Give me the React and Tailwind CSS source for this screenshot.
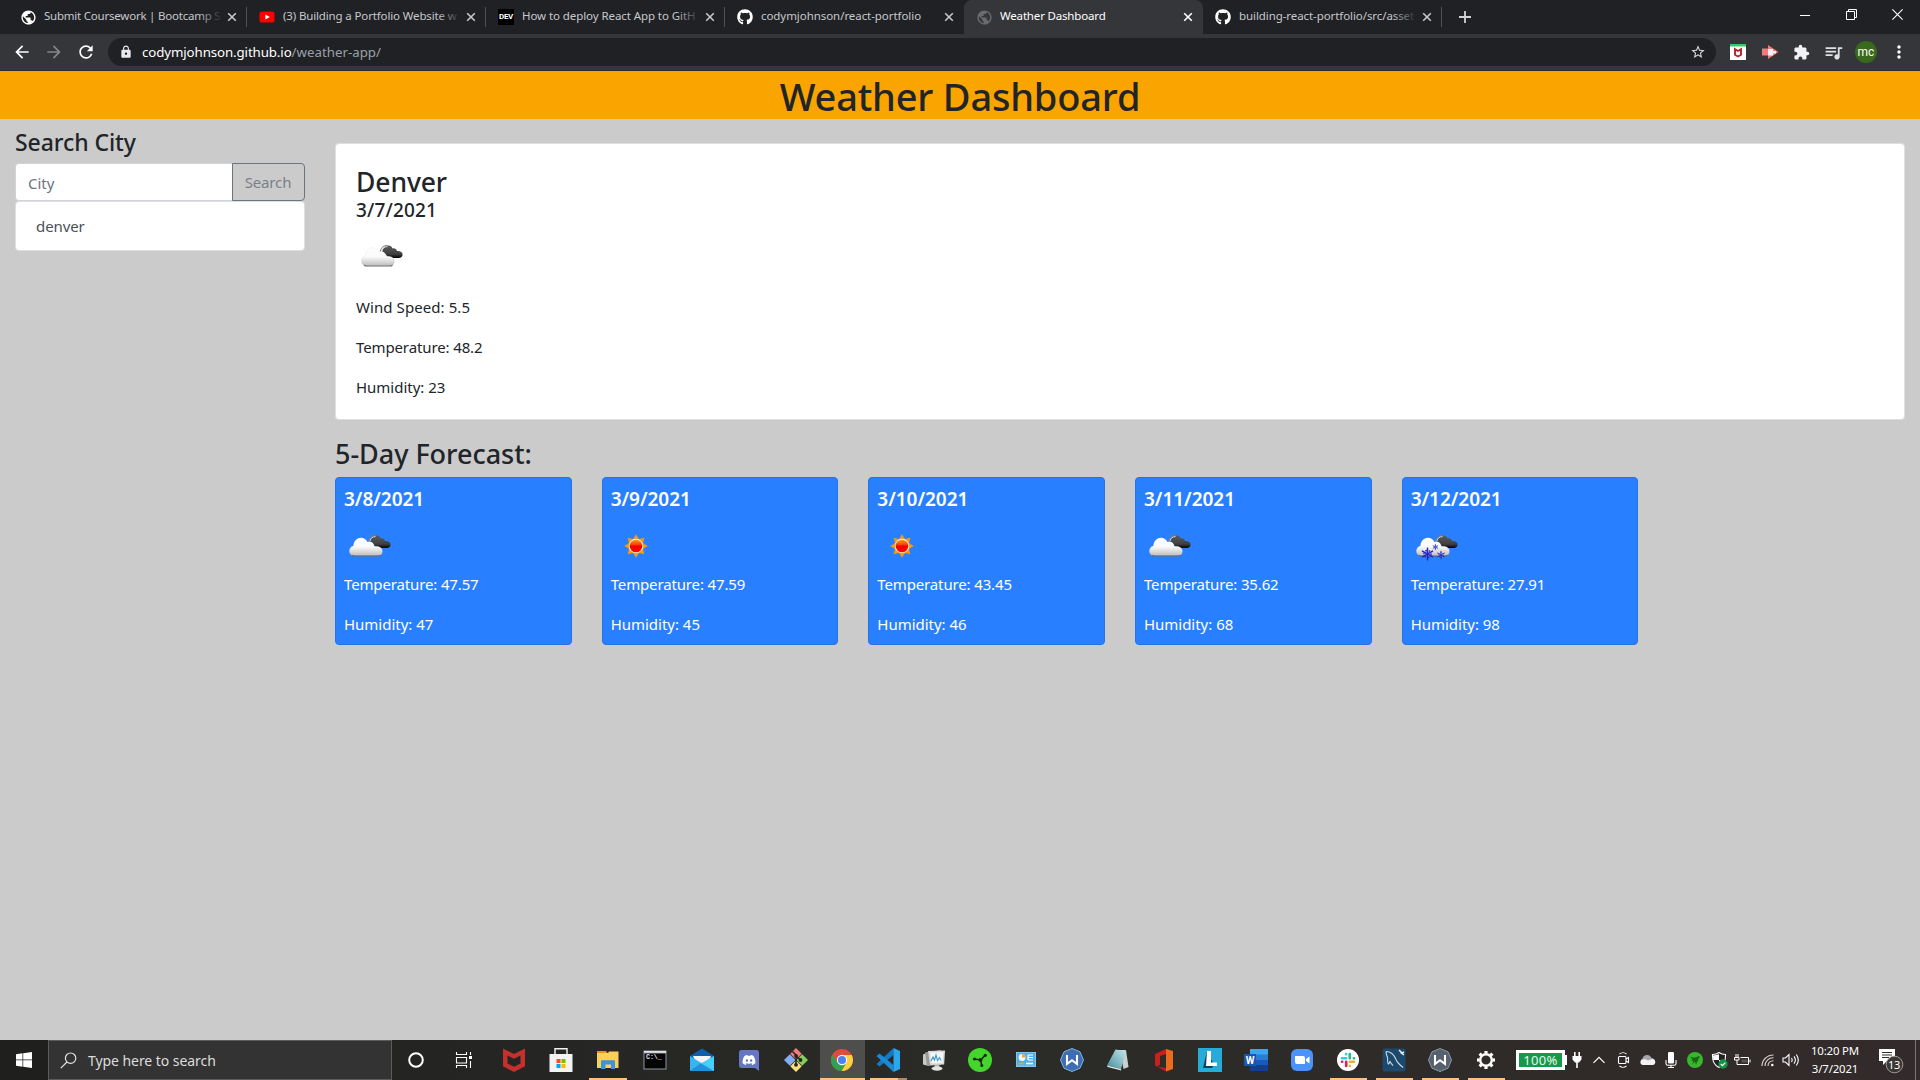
import React from "react";
import { FaGithub, FaDiscord } from "react-icons/fa";
import {
  MdExtension,
  MdQueueMusic,
  MdStarBorder,
  MdLock,
  MdRefresh,
  MdArrowBack,
  MdArrowForward,
  MdPublic,
  MdMoreVert,
} from "react-icons/md";

const Close = ({ className = "" }) => (
  <svg viewBox="0 0 10 10" className={"h-[10px] w-[10px] shrink-0 " + className}>
    <path d="M1.2 1.2 8.8 8.8M8.8 1.2 1.2 8.8" stroke="currentColor" strokeWidth="1.6" />
  </svg>
);

const YouTube = () => (
  <svg viewBox="0 0 16 16" className="h-4 w-4">
    <rect x="0.5" y="2.6" width="15" height="11" rx="2.6" fill="#f00" />
    <path d="M6.4 5.6v5L10.8 8.100z" fill="#fff" />
  </svg>
);

const DevIcon = () => (
  <div className="flex h-4 w-4 items-center justify-center bg-black">
    <span className="font-['Roboto',sans-serif] text-[8px] font-bold leading-none tracking-[-0.3px] text-white">DEV</span>
  </div>
);

const Globe = ({ className = "" }) => <MdPublic className={"h-[17px] w-[17px] " + className} />;
const Octo = () => <FaGithub className="h-4 w-4 text-white" />;

const tabs = [
  { icon: <Globe className="text-white" />, title: "Submit Coursework | Bootcamp S", track: "tracking-[-0.22px]", fade: true },
  { icon: <YouTube />, title: "(3) Building a Portfolio Website w", track: "tracking-[-0.14px]", fade: true },
  { icon: <DevIcon />, title: "How to deploy React App to GitH", track: "tracking-[-0.08px]", fade: true },
  { icon: <Octo />, title: "codymjohnson/react-portfolio", track: "tracking-[-0.06px]" },
  { icon: <Globe className="text-[#696b6f]" />, title: "Weather Dashboard", track: "tracking-[-0.17px]", active: true },
  { icon: <Octo />, title: "building-react-portfolio/src/asset", track: "tracking-[-0.08px]", fade: true },
];

function Tab({ tab, divider }) {
  return (
    <div
      className={
        "flex h-[34px] w-[239px] shrink-0 items-center pl-[11px] " +
        (tab.active ? "rounded-t-lg bg-[#35363a] text-white" : "text-[#c6c8cc]")
      }
    >
      <div className="flex w-[18px] shrink-0 justify-center">{tab.icon}</div>
      <div className="relative mb-[2px] ml-[7px] h-5 w-[178px] overflow-hidden whitespace-nowrap leading-5">
        <span className={"block text-[11.5px] leading-5 " + tab.track}>{tab.title}</span>
        {tab.fade && <div className="absolute inset-y-0 right-0 w-6 bg-gradient-to-r from-transparent to-[#202124]" />}
      </div>
      <Close className="ml-[5px]" />
      <div className={"ml-auto h-5 w-px " + (divider ? "bg-[#4f5155]" : "bg-transparent")} />
    </div>
  );
}

function TabStrip() {
  return (
    <div className="flex h-[34px] items-center bg-[#202124] pl-2">
      {tabs.map((t, i) => (
        <Tab key={i} tab={t} divider={i !== 3 && i !== 4} />
      ))}
      <svg viewBox="0 0 12 12" className="ml-[17px] h-3 w-3">
        <path d="M6 0v12M0 6h12" stroke="#d0d2d5" strokeWidth="1.8" />
      </svg>
      <div className="mb-[5px] ml-auto mr-[17px] flex items-center gap-[35px] text-white">
        <svg viewBox="0 0 10 10" className="-ml-px mr-px h-[10px] w-[10px]">
          <path d="M0 5.500h10" stroke="currentColor" />
        </svg>
        <svg viewBox="0 0 11 11" className="h-[11px] w-[11px]" fill="none" stroke="currentColor">
          <path d="M.5 2.500h8v8h-8zM2.500 2.500v-2h8v8h-2" />
        </svg>
        <svg viewBox="0 0 11 11" className="h-[11px] w-[11px]">
          <path d="M.4.4l10.200 10.200M10.600.4.4 10.600" stroke="currentColor" strokeWidth="1.1" />
        </svg>
      </div>
    </div>
  );
}

const McAfeeExt = () => (
  <svg viewBox="0 0 16 16" className="h-4 w-4">
    <path fill="#fff" d="M0 0h16v16H0z" />
    <path fill="#35c96b" d="M0 0h16v2.500H0z" />
    <path d="M5 5.200v5.600l3 1.700 3-1.700V5.200L8 7z" fill="none" stroke="#b6202c" strokeWidth="1.900" />
  </svg>
);

const ArrowExt = () => (
  <svg viewBox="0 0 17 14" className="h-[14px] w-[17px]">
    <path fill="#f37a7c" d="M0 3.500h6V0l10.500 7L6 14v-3.500H0z" />
    <path fill="#fff" d="M6 4h5v2h3v2.500h-3v2H6z" opacity=".85" />
  </svg>
);

function Toolbar() {
  return (
    <div className="flex h-[37px] items-center border-b border-[#2a2a2c] bg-[#35363a] pl-3">
      <MdArrowBack className="h-5 w-5 text-white" />
      <MdArrowForward className="ml-3 h-5 w-5 text-[#85878a]" />
      <MdRefresh className="ml-3 h-5 w-5 text-white" />
      <div className="ml-3 flex h-7 w-[1608px] items-center rounded-full bg-[#202124] pl-[11px] pr-[10px]">
        <MdLock className="h-[14px] w-[14px] text-[#e8eaed]" />
        <div className="ml-[9px] mt-[2px] text-[13.3px] leading-none text-[#9aa0a6]">
          <span className="tracking-[-0.11px] text-white">codymjohnson.github.io</span>
          <span>/weather-app/</span>
        </div>
        <MdStarBorder className="ml-auto h-4 w-4 text-[#dadce0]" />
      </div>
      <div className="ml-[14px] flex items-center">
        <McAfeeExt />
        <div className="ml-4">
          <ArrowExt />
        </div>
        <MdExtension className="ml-[14px] h-[17px] w-[17px] text-[#f1f3f4]" />
        <MdQueueMusic className="ml-[13px] h-[21px] w-[21px] text-[#dfe1e4]" />
        <div className="ml-[11px] flex h-[22px] w-[22px] items-center justify-center rounded-full bg-[#38691d] font-['Roboto',sans-serif] text-[12px] leading-none text-white">
          mc
        </div>
        <MdMoreVert className="ml-[12px] h-5 w-5 text-white" />
      </div>
    </div>
  );
}

/* Weather pictograms, all on a 50px square */
function Clouds() {
  return (
    <>
      <path
        d="M26 20c1-4 4-6 7-5.500 2 .3 3 1.500 3.500 3 2-.5 4 .5 4.500 2.500 3-.3 5.600 1 5.600 3.600 0 2.200-1.600 3.400-4 3.400H33z"
        fill="url(#dark-cloud)"
      />
      <path d="M24.300 20.500c.8-4.500 4-6.600 7.500-5.800" fill="none" stroke="#7d7d7d" strokeWidth="1" />
      <path d="M25.800 20.300c.8-3.300 3-5 5.800-4.600" fill="none" stroke="#d8d8d8" strokeWidth="1" />
      <path
        d="M10.500 34.800c-3.200 0-5.200-2-5.200-4.800 0-2.700 1.700-4.500 4-5 .3-4.500 3.200-8.300 7.500-8.300 3.300 0 5.500 1.600 6.700 4.300 3.700-1.300 6.600 1 6.800 4.300 4.600-.5 8.200 1.200 8.200 4.900 0 2.900-1.800 4.600-5 4.600z"
        fill="url(#light-cloud)"
        stroke="#9a9a9a"
        strokeOpacity=".16"
        strokeWidth=".6"
      />
      <path d="M8 34.200c1 .7 2 .8 3 .8h22.500c1 0 2.200-.2 3-.8" fill="none" stroke="#6d6d6d" strokeWidth="1.100" />
    </>
  );
}

function Flake({ x, y, r }) {
  const k = r * 0.866;
  const h = r * 0.5;
  return (
    <g transform={`translate(${x} ${y})`} stroke="#2626c4" strokeWidth={r / 4.6}>
      <path d={`M0 ${-r}V${r}M${-k} ${-h}L${k} ${h}M${-k} ${h}L${k} ${-h}`} />
      <circle r={r * 0.55} fill="none" strokeDasharray={`${r / 4} ${r / 3.4}`} />
    </g>
  );
}

function WeatherIcon({ kind }) {
  return (
    <svg viewBox="0 0 50 50" className="block h-[50px] w-[50px]">
      <defs>
        <linearGradient id="light-cloud" x1="0" y1="0" x2="0" y2="1">
          <stop offset="0" stopColor="#fff" />
          <stop offset=".5" stopColor="#fafafa" />
          <stop offset="1" stopColor="#bdbdbd" />
        </linearGradient>
        <linearGradient id="dark-cloud" x1="0" y1="0" x2="0" y2="1">
          <stop offset="0" stopColor="#5a5a5a" />
          <stop offset=".7" stopColor="#3f3f3f" />
          <stop offset="1" stopColor="#000" />
        </linearGradient>
        <linearGradient id="sun-disc" x1="0" y1="0" x2="0" y2="1">
          <stop offset="0" stopColor="#ff9a1a" />
          <stop offset=".4" stopColor="#fb3d06" />
          <stop offset=".5" stopColor="#f40000" />
          <stop offset="1" stopColor="#ff0a00" />
        </linearGradient>
      </defs>
      {kind === "sun" ? (
        <g transform="translate(25 25)">
          {[0, 45, 90, 135, 180, 225, 270, 315].map((a) => (
            <path key={a} d="M-2.800-7.200 0-11.800 2.800-7.200z" fill="#f19a12" transform={`rotate(${a})`} />
          ))}
          <circle r="7.800" fill="#f7a829" />
          <circle r="7.200" fill="#fff1d8" />
          <circle r="6.300" fill="url(#sun-disc)" />
        </g>
      ) : (
        <Clouds />
      )}
      {kind === "snow" && (
        <>
          <Flake x={16.5} y={33} r={6.4} />
          <Flake x={24.4} y={26} r={3.1} />
          <Flake x={30} y={34} r={4.2} />
        </>
      )}
    </svg>
  );
}

const forecast = [
  { date: "3/8/2021", kind: "cloud", temp: "47.57", hum: "47" },
  { date: "3/9/2021", kind: "sun", temp: "47.59", hum: "45" },
  { date: "3/10/2021", kind: "sun", temp: "43.45", hum: "46" },
  { date: "3/11/2021", kind: "cloud", temp: "35.62", hum: "68" },
  { date: "3/12/2021", kind: "snow", temp: "27.91", hum: "98" },
];

function Page() {
  return (
    <div className="flex-1 bg-[#cbcbcb] text-[#212529]">
      <h1 className="h-12 bg-[#faa400] text-center text-[38px] font-medium leading-[50px] tracking-[-0.2px]">
        Weather Dashboard
      </h1>
      <div className="flex">
        <aside className="w-[320px] px-[15px] pt-2">
          <h3 className="h-9 text-[23px] font-medium leading-[30px] tracking-[-0.08px]">Search City</h3>
          <div className="flex h-[38px]">
            <div className="flex-1 rounded-l border border-r-0 border-[#ced4da] bg-white pl-3 text-[15px] leading-[38px] text-[#6c757d]">
              City
            </div>
            <button className="w-[73px] rounded-r border border-[#6c757d] pr-px text-[15px] leading-[36px] tracking-[-0.15px] text-[#7a8087]">
              Search
            </button>
          </div>
          <div className="h-[50px] rounded border border-[#dfdfdf] bg-white pl-5 text-[15px] leading-[48px] tracking-[-0.1px] text-[#495057]">
            denver
          </div>
        </aside>
        <main className="flex-1 pl-[15px] pr-[15px] pt-6">
          <section className="h-[277px] rounded border border-[#dfdfdf] bg-white p-5 text-[15px] leading-6">
            <h3 className="h-[33px] text-[26.5px] font-medium leading-[37px] tracking-[-0.1px]">Denver</h3>
            <h5 className="h-6 text-[19px] font-medium leading-[26px] tracking-[0.14px]">3/7/2021</h5>
            <div className="mb-[14px] mt-[10px]">
              <WeatherIcon kind="cloud" />
            </div>
            <p className="mb-4 tracking-[0.08px]">Wind Speed: 5.5</p>
            <p className="mb-4 tracking-[-0.12px]">Temperature: 48.2</p>
            <p className="tracking-[-0.02px]">Humidity: 23</p>
          </section>
          <h3 className="mt-4 h-[41px] text-[27px] font-medium leading-[35px] tracking-[-0.03px]">5-Day Forecast:</h3>
          <div className="flex gap-[30px]">
            {forecast.map((d) => (
              <article
                key={d.date}
                className="h-[168px] w-[236.67px] rounded border border-[#2573e6] bg-[#287fff] p-2 text-[15px] leading-6 text-white"
              >
                <h5 className="h-6 text-[19px] font-semibold leading-[27px] tracking-[-0.02px]">{d.date}</h5>
                <div className="mb-px mt-[11px]">
                  <WeatherIcon kind={d.kind} />
                </div>
                <p className="mb-4 tracking-[-0.14px]">Temperature: {d.temp}</p>
                <p className="tracking-[-0.02px]">Humidity: {d.hum}</p>
              </article>
            ))}
          </div>
        </main>
      </div>
    </div>
  );
}

/* Taskbar icons, each on a 24px square */
const Ico = ({ children }) => (
  <svg viewBox="0 0 24 24" className="h-6 w-6">
    {children}
  </svg>
);

const Cortana = () => (
  <Ico>
    <circle cx="12" cy="12" r="6.800" fill="none" stroke="#fff" strokeWidth="2" />
  </Ico>
);
const TaskView = () => (
  <Ico>
    <path d="M4.500 4v2.500h10V4M4.500 20v-2.500h10V20M4.500 9.500h10v5.500h-10zM18.500 4v3M18.500 13v7" fill="none" stroke="#fff" strokeWidth="1.100" />
    <path d="M17 8h3v3h-3z" fill="#fff" />
  </Ico>
);
const McAfee = () => (
  <Ico>
    <path d="M1 .5 12 6 23 .5v17.800L12 24 1 18.300zM5.500 7.500v8L12 18.800l6.500-3.300v-8L12 10.800z" fill="#c5302f" fillRule="evenodd" />
  </Ico>
);
const Store = () => (
  <Ico>
    <path d="M6 6V.8h12V6" fill="none" stroke="#f3f3f3" strokeWidth="1.400" />
    <path d="M.5 6h23v18H.5z" fill="#f3f3f3" />
    <path d="M7.500 11h4v4h-4z" fill="#f25022" />
    <path d="M12.500 11h4v4h-4z" fill="#7fba00" />
    <path d="M7.500 16h4v4h-4z" fill="#00a4ef" />
    <path d="M12.500 16h4v4h-4z" fill="#ffb900" />
  </Ico>
);
const Explorer = () => (
  <Ico>
    <path d="M1 3h9l1.500 2H1z" fill="#e19b12" />
    <path d="M1 5h11l1-1.500h9.500V20H1z" fill="#fbcf5c" />
    <path d="M5 13.500c0-.8.500-1.300 1.300-1.300h11.400c.8 0 1.300.5 1.300 1.300V21h-4v-4.500H9.500V21H5z" fill="#3d93d9" />
  </Ico>
);
const Cmd = () => (
  <Ico>
    <path d="M.5 2.500h23v19H.5z" fill="#8f979c" />
    <path d="M1.500 5.500h21v15h-21z" fill="#050505" />
    <path d="M1 3h22v1.800H1z" fill="#dfe3e6" />
    <text x="3" y="11" fontSize="6.500" fill="#e8e8e8" fontFamily="Liberation Mono" fontWeight="700">C:\_</text>
  </Ico>
);
const Mail = () => (
  <Ico>
    <path d="M0 8 12 .5 24 8v4H0z" fill="#0f5fae" />
    <path d="M3 8h18l-3 7H6z" fill="#f3f5f7" />
    <path d="M0 8l12 7.500L0 23z" fill="#36b5f0" />
    <path d="M24 8 0 23h24z" fill="#37c1f6" />
    <path d="M0 23h24L12 14.500z" fill="#1d92e0" />
    <path d="M24 8v15L11 15.500z" fill="#46cdf9" />
  </Ico>
);
const Discord = () => (
  <div className="relative flex h-6 w-6 items-center justify-center">
    <Ico>
      <path d="M4.500 2h15A2.500 2.500 0 0 1 22 4.500V23l-4-3H4.500A2.500 2.500 0 0 1 2 17.500v-13A2.500 2.500 0 0 1 4.500 2z" fill="#6577c4" />
    </Ico>
    <FaDiscord className="absolute left-[5px] top-[5px] h-[14px] w-[14px] text-white" />
  </div>
);
const Git = () => (
  <Ico>
    <path d="m12 0 5.700 5.700L12 11.400 6.300 5.700z" fill="#f07c7c" />
    <path d="m5.800 6.300 5.700 5.700-5.700 5.700L0 12z" fill="#82aef5" />
    <path d="m18.200 6.300L24 12l-5.800 5.700-5.700-5.700z" fill="#85cf5a" />
    <path d="m12 12.600 5.700 5.700L12 24l-5.700-5.700z" fill="#f8e07a" />
    <path d="M8.500 3.500 12 7v10.500M12 8l4.500 4" stroke="#2b2320" strokeWidth="1.600" fill="none" />
    <circle cx="12" cy="7.800" r="1.900" fill="#2b2320" />
    <circle cx="16.500" cy="12" r="1.900" fill="#2b2320" />
    <circle cx="12" cy="16.800" r="1.900" fill="#2b2320" />
  </Ico>
);
const Chrome = () => (
  <Ico>
    <circle cx="12" cy="12" r="11" fill="#e04a3f" />
    <path d="M12 7h9.800A11 11 0 0 1 11.500 23l4.800-8.500z" fill="#fdd13d" />
    <path d="M2.500 6.500A11 11 0 0 0 11.500 23l4.800-8.500L12 12l-4.300 2.500z" fill="#2fa14f" />
    <circle cx="12" cy="12" r="5.200" fill="#f4f4f4" />
    <circle cx="12" cy="12" r="4" fill="#4a83ee" />
  </Ico>
);
const VSCode = () => (
  <Ico>
    <path d="M17.500 0v7L3.500 18.500.5 16z" fill="#1479c4" />
    <path d="M17.500 24v-7L3.500 5.500.5 8z" fill="#1a8ad8" />
    <path d="M17.500 0 24 3v18l-6.500 3z" fill="#2ba7ee" />
  </Ico>
);
const Monitor = () => (
  <Ico>
    <path d="M1 6.500 7 4v14l-6-1.500z" fill="#c9c9c6" />
    <path d="M3 4.500 19 2v15l-14 1z" fill="#9a9b99" />
    <path d="M6 3l17-.5-.8 14L8 17z" fill="#d9dad8" />
    <path d="M8 4.500l13.300-.4-.7 10.800L9.500 15.300z" fill="#f1f6fa" />
    <path d="M9 13l2-4 1.500 3L14 7l1.500 5.500 2-3 1.500 3" fill="none" stroke="#3b98cf" strokeWidth="1.100" />
    <path d="M13 17h4l1 3h-6z" fill="#bdbdbb" />
    <ellipse cx="15" cy="20.500" rx="5.500" ry="2.200" fill="#e3e3e1" />
  </Ico>
);
const RazerCortex = () => (
  <Ico>
    <circle cx="12" cy="12" r="12" fill="#44d62c" />
    <path d="M12.500 12 6.500 11M12.500 12l4.500-4.500M12.500 12l1.300 5.500" stroke="#1c2a17" strokeWidth="1.600" />
    <circle cx="6.500" cy="11" r="1.600" fill="#1c2a17" />
    <circle cx="17.300" cy="7.300" r="1.600" fill="#1c2a17" />
    <circle cx="13.800" cy="17.500" r="1.500" fill="#1c2a17" />
    <circle cx="12.500" cy="12" r="2" fill="#1c2a17" />
  </Ico>
);
const ControlPanel = () => (
  <Ico>
    <path d="M2 4h20v15H2z" fill="#7cc7ee" />
    <path d="M3 5h18v12.500H3z" fill="#4fb0e8" />
    <circle cx="8" cy="9.500" r="3.400" fill="#f3f7fa" />
    <path d="M8 9.500V6a3.500 3.500 0 0 1 3.500 3.500z" fill="#f2a53a" />
    <path d="M14 7h5M14 9.500h5M14 12h5M14 7v5" stroke="#fff" strokeWidth="1.200" fill="none" />
    <path d="M4.500 15.500h6" stroke="#e9a438" strokeWidth="1.600" />
    <path d="M12 15.500h7" stroke="#fff" strokeWidth="1.600" />
  </Ico>
);
const OctagonW = ({ fill, stroke }) => (
  <Ico>
    <path d="M12 .5 20 3.800 23.500 12 20 20.200 12 23.500 4 20.200.5 12 4 3.800z" fill={fill} stroke={stroke} />
    <path d="M7 7v9l5-3.800L17 16V7" fill="none" stroke="#fff" strokeWidth="2.100" />
  </Ico>
);
const Notepad = () => (
  <Ico>
    <path d="M9 2h11l2.500 17-5 2L14 4z" fill="#c9cfce" />
    <path d="M9.500 1.500 20 3l-5 18L1 17.500z" fill="url(#note-paper)" />
    <path d="M1 17.500 15 21l.3 1.500L1.500 19z" fill="#e7e7e0" />
    <defs>
      <linearGradient id="note-paper" x1="0" y1="1" x2="1" y2="0">
        <stop offset="0" stopColor="#3f8f9c" />
        <stop offset="1" stopColor="#c8e6ea" />
      </linearGradient>
    </defs>
  </Ico>
);
const Office = () => (
  <Ico>
    <path d="M3 6 14 1v5L8 8v9l-3 1.500-2-1z" fill="#c8201d" />
    <path d="M14 1l7 2v18l-7 2.500z" fill="#ec6a1b" />
    <path d="M4.500 18.500 14 20v3.500z" fill="#b71d25" />
  </Ico>
);
const LApp = () => (
  <Ico>
    <path d="M0 0h24v24H0z" fill="#27abd9" />
    <path d="M9 3 5 20h9l2-3z" fill="#123f5c" />
    <path d="M9 3h4v11.500h6V18H8z" fill="#fff" />
  </Ico>
);
const Word = () => (
  <Ico>
    <path d="M6 1h18v6H6z" fill="#41a5ee" />
    <path d="M6 6.500h18V12H6z" fill="#2b7cd3" />
    <path d="M6 12h18v5.500H6z" fill="#185abd" />
    <path d="M6 17.500h18V23H6z" fill="#103f91" />
    <path d="M0 6h12v12H0z" fill="#1b55b0" />
    <text x="6" y="15.500" fontSize="10" textAnchor="middle" fontWeight="700" fontFamily="Roboto" fill="#fff">W</text>
  </Ico>
);
const Zoom = () => (
  <Ico>
    <rect x="1" y="1" width="22" height="22" rx="6" fill="#4b92fb" />
    <path d="M5 8h8a2 2 0 0 1 2 2v6H7a2 2 0 0 1-2-2zM16 11l3.500-2.500v7L16 13z" fill="#fff" />
  </Ico>
);
const Slack = () => (
  <Ico>
    <circle cx="12" cy="12" r="11" fill="#fff" />
    <g strokeWidth="2.600" strokeLinecap="round">
      <path d="M6 10.200h4.200M10.200 6v.2" stroke="#36c5f0" />
      <path d="M13.800 6v4.200M18 10.200h-.2" stroke="#2eb67d" />
      <path d="M13.800 13.800H18M13.800 18v-.2" stroke="#ecb22e" />
      <path d="M10.200 13.800V18M6 13.800h.2" stroke="#e01e5a" />
    </g>
  </Ico>
);
const MySQL = () => (
  <Ico>
    <rect x=".5" y=".5" width="23" height="23" rx="2" fill="#1d4a6c" />
    <path d="M4 3.500c4 0 8 3 10 8 1 3 3 4.500 7 8M4 3.500c0 3 1 4 1.500 6 .3 2-.5 5 1 6.500 1-.5 1-2 1.500-2.500 1 2 2 3 3 4" fill="none" stroke="#c4dae8" strokeWidth="1.100" />
    <path d="m17 2 3 3 2-1M18.500 4.500 22 7" fill="none" stroke="#e6eff5" strokeWidth="1.500" />
  </Ico>
);
const Gear = () => (
  <Ico>
    <g fill="none" stroke="#fff">
      <circle cx="12" cy="12" r="5.800" strokeWidth="2.400" />
      {[0, 45, 90, 135, 180, 225, 270, 315].map((a) => (
        <path key={a} d="M12 5.500V3" strokeWidth="3.200" transform={`rotate(${a} 12 12)`} />
      ))}
    </g>
  </Ico>
);

const apps = [
  { icon: <McAfee /> },
  { icon: <Store /> },
  { icon: <Explorer />, open: true },
  { icon: <Cmd /> },
  { icon: <Mail /> },
  { icon: <Discord /> },
  { icon: <Git /> },
  { icon: <Chrome />, active: true },
  { icon: <VSCode />, open: true, multi: true },
  { icon: <Monitor /> },
  { icon: <RazerCortex /> },
  { icon: <ControlPanel /> },
  { icon: <OctagonW fill="#3f6db3" stroke="#7fb4de" /> },
  { icon: <Notepad /> },
  { icon: <Office /> },
  { icon: <LApp /> },
  { icon: <Word /> },
  { icon: <Zoom /> },
  { icon: <Slack />, open: true },
  { icon: <MySQL />, open: true },
  { icon: <OctagonW fill="#56616e" stroke="#8b99a6" />, open: true },
  { icon: <Gear />, open: true },
];

function AppButton({ app, wide }) {
  return (
    <div className={"relative flex h-10 shrink-0 items-center justify-center " + (wide ? "w-[47px]" : "w-[46px]")}>
      {app.active && <div className="absolute inset-y-0 left-px right-0 bg-[#4e4e4c]" />}
      <div className="relative">{app.icon}</div>
      {app.active && <div className="absolute bottom-0 left-px right-0 h-0.5 bg-[#ffc083]" />}
      {app.open && (
        <div className="absolute bottom-0 left-[5px] right-1 flex h-0.5 bg-[#ffc083]">
          {app.multi && <div className="ml-auto w-[9px] bg-[#b18b66]" />}
        </div>
      )}
    </div>
  );
}

function Tray() {
  return (
    <div className="ml-[7px] flex items-center text-white">
      <div className="flex h-5 w-[49px] items-center justify-center border-[3px] border-white bg-[#159a4b]">
        <span className="text-[13px] leading-none tracking-[0.3px] text-[#e9f6ec]">100%</span>
      </div>
      <div className="h-[10px] w-[2px] bg-white" />
      <svg viewBox="0 0 10 16" className="ml-[5px] mr-px h-4 w-[10px]" fill="#fff">
        <path d="M2 0h1.600v4H2zM6.400 0H8v4H6.400zM.5 4h9v3.500L7 10.500H3L.5 7.500zM4.200 10h1.600v6H4.200z" />
      </svg>
      <svg viewBox="0 0 12 8" className="ml-[10px] h-2 w-3">
        <path d="M.5 6.800 6 1.300l5.500 5.500" fill="none" stroke="#fff" strokeWidth="1.200" />
      </svg>
      <svg viewBox="0 0 14 16" className="ml-[11px] h-4 w-[14px]" fill="none" stroke="#fff" strokeWidth="1.100">
        <rect x="2.500" y="4.500" width="7.500" height="7" rx="1" />
        <path d="M10 7l2.500-1.500v5L10 9M3.500 2.200c2-1.900 5-1.900 7 0M3.500 13.800c2 1.900 5 1.900 7 0" />
      </svg>
      <svg viewBox="0 0 17 12" className="ml-[9px] h-3 w-[17px]">
        <path d="M4 11a3.500 3.500 0 0 1-.5-6.500A4.800 4.800 0 0 1 12.500 4 3.600 3.600 0 0 1 13 11z" fill="#a8a6a5" />
        <path d="M3.500 11A2.800 2.800 0 0 1 4 5.500c2-.8 3.500 0 5 1l4-1.500a3 3 0 0 1 .5 6z" fill="#f2f2f2" />
      </svg>
      <svg viewBox="0 0 12 16" className="ml-[9px] h-4 w-3">
        <rect x="3" y="0" width="6" height="11.500" rx="1.200" fill="#fff" />
        <path d="M1 8v3.500c0 1 .8 1.800 1.800 1.800h6.400c1 0 1.800-.8 1.800-1.800V8M6 13v2.500M3 15.500h6" fill="none" stroke="#fff" strokeWidth="1.100" />
      </svg>
      <svg viewBox="0 0 16 16" className="ml-[10px] h-4 w-4">
        <circle cx="8" cy="8" r="8" fill="#36b82a" />
        <path d="M3 4.500c2 1 3 1 5 1s3-2 5-1.500c-1 .5-.8 1.500-.5 2.500-1.500-.5-1.800.5-1 2l-1.300 1-1.200 3.500-1-3.500L5.500 12l.8-3.500L3.500 9l2-1.500z" fill="#1a6318" />
      </svg>
      <svg viewBox="0 0 17 17" className="ml-[8px] h-[17px] w-[17px]">
        <path d="M8 .5c2 1.500 4 2 6.500 2 .3 6-1.500 10.500-6.500 13-5-2.500-6.800-7-6.500-13 2.500 0 4.500-.5 6.500-2z" fill="#222" stroke="#fff" strokeWidth="1.100" />
        <path d="M8 2v6H2.300c-.2-1.500-.3-3-.3-4.500 2-.1 4-.5 6-1.500zM8 8h5.700c-.8 3.300-2.700 5.500-5.700 7z" fill="#fff" />
        <circle cx="12" cy="12" r="4.700" fill="#149246" />
        <path d="m9.800 12 1.700 1.700 2.800-3" fill="none" stroke="#fff" strokeWidth="1.200" />
      </svg>
      <svg viewBox="0 0 17 14" className="ml-[6px] h-[14px] w-[17px]" fill="none" stroke="#fff">
        <path d="M6.500 4.500h8v7h-8M16 6.500v3M4 1v3M2 1v3M.5 4.500H5v2.500H.5zM3 7v4.500h4" />
        <path d="M7.500 6.500h6v3h-6z" fill="#fff" stroke="none" opacity=".2" />
      </svg>
      <svg viewBox="0 0 14 13" className="ml-[10px] h-[13px] w-[14px]" fill="none" stroke="#d6d2d1" strokeWidth="1.100">
        <path d="M1 12C1 6 6 1 12.500 1M4 12c0-4.700 3.500-8.200 8.500-8.200M7 12c0-3 2.200-5.300 5.500-5.300" />
        <circle cx="11.300" cy="11" r="1.300" fill="#fff" stroke="none" />
      </svg>
      <svg viewBox="0 0 17 14" className="ml-[7px] h-[14px] w-[17px]" fill="none" stroke="#fff" strokeWidth="1.100">
        <path d="M1 5h2.500L7 1.500v11L3.500 9H1zM9.500 5c.8 1.200.8 2.800 0 4M12 3.300c1.700 2.300 1.700 5.100 0 7.400M14.300 1.500c2.400 3.300 2.400 7.700 0 11" />
      </svg>
      <div className="ml-[6px] w-[60px] text-center text-[11.4px] leading-[18px] tracking-[-0.15px]">
        <div>10:20 PM</div>
        <div>3/7/2021</div>
      </div>
      <div className="relative ml-[14px] mt-px h-[26px] w-[26px]">
        <svg viewBox="0 0 26 26" className="h-[26px] w-[26px]">
          <path d="M0 1h16v12H8l-4 4v-4H0z" fill="#fff" />
          <path d="M3 4.500h10M3 7h10M3 9.500h7" stroke="#302a29" strokeWidth="1.100" />
          <circle cx="15.500" cy="16.500" r="8.300" fill="#3b3534" stroke="#a19c9b" />
        </svg>
        <span className="absolute left-[7px] top-[10px] w-4 text-center text-[11px] leading-[14px] tracking-[-0.2px]">13</span>
      </div>
    </div>
  );
}

function Taskbar() {
  return (
    <div className="flex h-10 items-center bg-gradient-to-r from-[#1f1f1e] via-[#2a2b27] to-[#332b2b]">
      <div className="flex w-12 justify-center">
        <svg viewBox="0 0 16 16" className="h-4 w-4" fill="#fff">
          <path d="M0 2.200 6.500 1.300v6.300H0zM7.200 1.200 16 0v7.600H7.200zM0 8.300h6.500v6.400L0 13.800zM7.200 8.300H16V16l-8.800-1.200z" />
        </svg>
      </div>
      <div className="flex h-10 w-[344px] items-center border border-[#5c5c5c] bg-[#333333] pl-[11px]">
        <svg viewBox="0 0 17 17" className="h-[17px] w-[17px]" fill="none" stroke="#e4e4e4" strokeWidth="1.200">
          <circle cx="10.600" cy="6.200" r="5.200" />
          <path d="M7 10 .8 16.200" />
        </svg>
        <span className="ml-[11px] mt-px text-[14px] leading-none tracking-[-0.06px] text-[#dcdcdc]">Type here to search</span>
      </div>
      <div className="flex w-12 justify-center">
        <Cortana />
      </div>
      <div className="mr-[2px] flex w-12 justify-center">
        <TaskView />
      </div>
      {apps.map((a, i) => (
        <AppButton key={i} app={a} wide={i < 7} />
      ))}
      <Tray />
      <div className="ml-auto mr-1 h-10 w-px bg-[#7b7675]" />
    </div>
  );
}

export default function App() {
  return (
    <div className="flex h-[1080px] w-[1920px] flex-col overflow-hidden font-['Noto_Sans','Open_Sans',sans-serif]">
      <TabStrip />
      <Toolbar />
      <Page />
      <Taskbar />
    </div>
  );
}
